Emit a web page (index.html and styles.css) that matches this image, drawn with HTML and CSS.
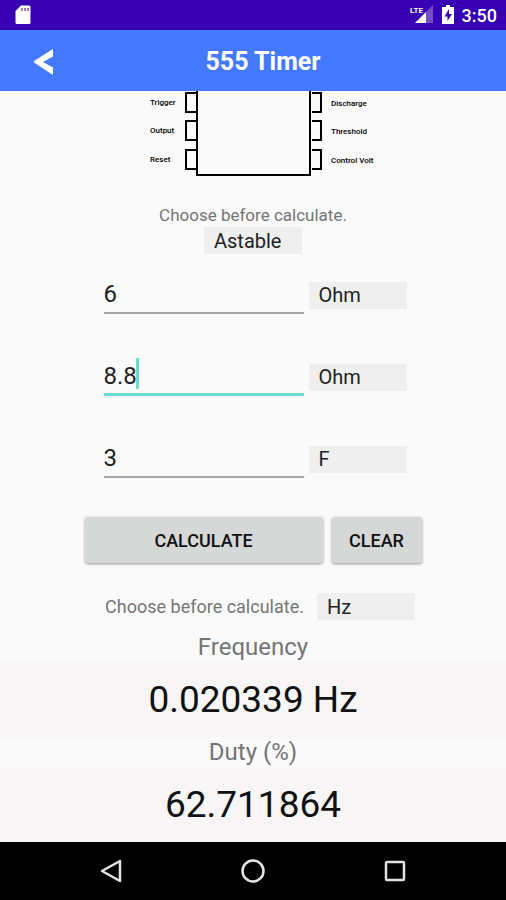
FILE: index.html
```html
<!DOCTYPE html>
<html lang="en">

<head>
    <meta charset="UTF-8">
    <meta name="viewport" content="width=device-width, initial-scale=1.0">
    <title>555 Timer</title>
    <link rel="stylesheet" href="styles.css">
</head>

<body>
    <div class="status-bar">
        <svg width="16" height="20" viewBox="0 0 16 20">
            <path d="M6 0.500H14Q15.500 0.500 15.500 2V17.500Q15.500 19 14 19H2Q0.500 19 0.500 17.500V6Z" fill="#fff" />
            <path d="M7 3v3M10 3v3M13 3v3" stroke="#3700b3" stroke-width="1" />
        </svg>
        <div class="status-right">
            <svg width="24" height="20" viewBox="0 0 24 20">
                <path d="M23 0V18H5Z" fill="#fff" opacity="0.300" />
                <path d="M16 7V18H5Z" fill="#fff" />
                <path d="M0 0H14V7L12 9H0Z" fill="#3700b3" />
                <text class="lte" x="0" y="8">LTE</text>
            </svg>
            <svg width="12" height="20" viewBox="0 0 12 20">
                <path d="M4 0h4v2h4v17H0V2h4Z" fill="#fff" />
                <path d="M7 4L2.500 11.500H5.500V16L10 9H7Z" fill="#3700b3" />
            </svg>
            <span class="clock">3:50</span>
        </div>
    </div>

    <header class="app-bar">
        <button class="back-button" aria-label="Back">
            <svg width="20" height="28" viewBox="0 0 20 28">
                <path d="M19 1V8.500L9 14L19 19.500V27L0 14.500V13Z" fill="#fff" />
            </svg>
        </button>
        <h1 class="title">555 Timer</h1>
    </header>

    <main class="content">
        <svg class="chip" width="260" height="88" viewBox="0 0 260 88">
            <g fill="none" stroke="#000" stroke-width="2">
                <path d="M74 0V84H187V0" />
                <path d="M73 2H63V21H73M73 30H63V49H73M73 59H63V78H73" />
                <path d="M189 2H198V21H189M189 30H198V49H189M189 59H198V78H189" />
            </g>
            <g class="pin-label">
                <text x="27" y="14">Trigger</text>
                <text x="27" y="42">Output</text>
                <text x="27" y="71">Reset</text>
                <text x="208" y="15">Discharge</text>
                <text x="208" y="43">Threshold</text>
                <text x="208" y="72">Control Volt</text>
            </g>
        </svg>

        <div class="mode">
            <label class="hint" for="mode">Choose before calculate.</label>
            <select class="unit" id="mode">
                <option>Astable</option>
                <option>Monostable</option>
            </select>
        </div>

        <form class="fields">
            <div class="field">
                <div class="entry">
                    <input class="value" type="text" value="6" aria-label="R1">
                </div>
                <select class="unit" aria-label="R1 unit">
                    <option>Ohm</option>
                    <option>kOhm</option>
                </select>
            </div>
            <div class="field">
                <div class="entry">
                    <input class="value active" type="text" value="8.8" aria-label="R2">
                    <span class="caret"></span>
                </div>
                <select class="unit" aria-label="R2 unit">
                    <option>Ohm</option>
                    <option>kOhm</option>
                </select>
            </div>
            <div class="field">
                <div class="entry">
                    <input class="value" type="text" value="3" aria-label="C">
                </div>
                <select class="unit" aria-label="C unit">
                    <option>F</option>
                    <option>uF</option>
                </select>
            </div>
        </form>

        <div class="buttons">
            <button class="button calculate">CALCULATE</button>
            <button class="button clear">CLEAR</button>
        </div>

        <div class="output-unit">
            <label class="hint large" for="output">Choose before calculate.</label>
            <select class="unit" id="output">
                <option>Hz</option>
                <option>kHz</option>
            </select>
        </div>

        <section class="results">
            <h2 class="result-name">Frequency</h2>
            <div class="result">0.020339 Hz</div>
            <h2 class="result-name">Duty (%)</h2>
            <div class="result">62.711864</div>
        </section>
    </main>

    <nav class="nav-bar">
        <button class="nav-button" aria-label="Back">
            <svg width="24" height="26" viewBox="0 0 24 26">
                <path d="M21 3V23L3 13Z" fill="none" stroke="#e4e4e4" stroke-width="2.500" stroke-linejoin="round" />
            </svg>
        </button>
        <button class="nav-button" aria-label="Home">
            <svg width="26" height="26" viewBox="0 0 26 26">
                <circle cx="13" cy="13" r="10.500" fill="none" stroke="#e4e4e4" stroke-width="2.500" />
            </svg>
        </button>
        <button class="nav-button" aria-label="Recents">
            <svg width="24" height="24" viewBox="0 0 24 24">
                <rect x="3" y="3" width="18" height="18" rx="1" fill="none" stroke="#e4e4e4" stroke-width="2.500" />
            </svg>
        </button>
    </nav>
</body>

</html>
```

FILE: styles.css
```css
* {
    box-sizing: border-box;
}

body {
    margin: 0;
    min-height: 100vh;
    display: flex;
    flex-direction: column;
    font-family: Roboto, sans-serif;
    background: #fafafa;
    color: #111;
}

button {
    border: none;
    padding: 0;
    background: none;
    font-family: inherit;
    cursor: pointer;
}

svg {
    display: block;
}

.status-bar {
    height: 30px;
    padding: 0 9px 0 15px;
    display: flex;
    align-items: center;
    justify-content: space-between;
    background: #3700b3;
    color: white;
}

.status-right {
    display: flex;
    align-items: center;
    gap: 8px;
}

.lte {
    font-size: 8px;
    font-weight: bold;
    fill: white;
}

.clock {
    font-size: 18px;
    font-weight: 500;
}

.app-bar {
    height: 61px;
    padding: 2px 34px 0;
    display: grid;
    grid-template-columns: 20px 1fr;
    align-items: center;
    background: #4479ff;
    color: white;
}

.title {
    margin: 0;
    font-size: 25px;
    line-height: 30px;
    font-weight: bold;
    text-align: center;
}

.content {
    flex: 1;
    display: flex;
    flex-direction: column;
    align-items: center;
}

.pin-label {
    font-size: 8px;
    font-weight: 500;
}

.mode {
    margin-top: 25px;
    display: flex;
    flex-direction: column;
    align-items: center;
    gap: 1px;
}

.hint {
    font-size: 17px;
    line-height: 22px;
    color: #757575;
}

.hint.large {
    font-size: 18px;
}

.unit {
    width: 98px;
    height: 27px;
    padding: 0 10px;
    border: none;
    border-radius: 0;
    appearance: none;
    background: #efefef;
    font-family: inherit;
    font-size: 20px;
    color: #222;
}

.fields {
    padding-left: 4px;
}

.field {
    height: 82px;
    display: flex;
    align-items: center;
    gap: 5px;
}

.entry {
    position: relative;
    width: 200px;
}

.value {
    display: block;
    width: 100%;
    height: 38px;
    padding: 0;
    border: none;
    border-bottom: 2px solid #a5a5a5;
    background: none;
    font-family: inherit;
    font-size: 24px;
    color: #222;
}

.value.active {
    border-bottom: 3px solid #6cdccb;
}

.caret {
    position: absolute;
    top: 0;
    left: 32px;
    width: 3px;
    height: 31px;
    background: #6cdccb;
}

.buttons {
    margin-top: 17px;
    display: flex;
    gap: 9px;
}

.button {
    height: 46px;
    border-radius: 3px;
    background: #d6d7d7;
    box-shadow: 0 1px 3px rgba(0, 0, 0, 0.4);
    font-size: 18px;
    font-weight: 500;
    color: #111;
}

.calculate {
    width: 238px;
}

.clear {
    width: 90px;
}

.output-unit {
    margin-top: 30px;
    padding-left: 14px;
    display: flex;
    align-items: center;
    gap: 13px;
}

.results {
    margin-top: 12px;
    width: 100%;
    text-align: center;
}

.result-name {
    margin: 0;
    font-size: 24px;
    line-height: 31px;
    font-weight: normal;
    color: #757575;
}

.result {
    background: #f7f5f6;
    font-size: 37px;
    line-height: 74px;
}

.nav-bar {
    height: 58px;
    padding: 0 40px;
    display: grid;
    grid-template-columns: repeat(3, 1fr);
    align-items: center;
    justify-items: center;
    background: black;
}
```
